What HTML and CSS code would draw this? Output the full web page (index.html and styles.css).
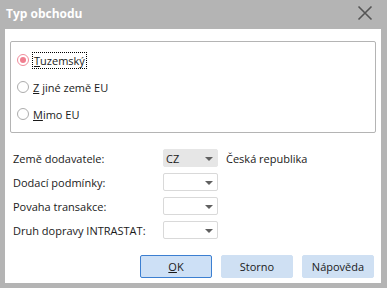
FILE: index.html
```html
<!DOCTYPE html>
<html lang="cs">
<head>
    <meta charset="UTF-8">
    <title>Typ obchodu</title>
    <link rel="stylesheet" href="styles.css">
</head>
<body>
    <div class="dialog">
        <div class="titlebar">
            <span class="title">Typ obchodu</span>
            <svg class="close" width="16" height="16" viewBox="0 0 16 16">
                <path d="M1.5 1.5 L14.5 14.5 M14.5 1.5 L1.5 14.5" stroke="#555" stroke-width="1.6" fill="none"/>
            </svg>
        </div>
        <div class="client">
            <div class="group">
                <label class="radio">
                    <span class="dot checked"></span>
                    <span class="focus"><u>T</u>uzemský</span>
                </label>
                <label class="radio">
                    <span class="dot"></span>
                    <span><u>Z</u> jiné země EU</span>
                </label>
                <label class="radio">
                    <span class="dot"></span>
                    <span><u>M</u>imo EU</span>
                </label>
            </div>

            <div class="fields">
                <div class="row">
                    <span class="label">Země dodavatele:</span>
                    <div class="combo disabled"><span>CZ</span><i class="arrow"></i></div>
                    <span class="note">Česká republika</span>
                </div>
                <div class="row">
                    <span class="label">Dodací podmínky:</span>
                    <div class="combo"><span></span><i class="arrow"></i></div>
                </div>
                <div class="row">
                    <span class="label">Povaha transakce:</span>
                    <div class="combo"><span></span><i class="arrow"></i></div>
                </div>
                <div class="row">
                    <span class="label">Druh dopravy INTRASTAT:</span>
                    <div class="combo"><span></span><i class="arrow"></i></div>
                </div>
            </div>

            <div class="buttons">
                <button class="default"><u>O</u>K</button>
                <button>Storno</button>
                <button>Nápověda</button>
            </div>
        </div>
    </div>
</body>
</html>
```

FILE: styles.css
```css
body {
    margin: 0;
    background-color: #b4b4b4;
    font-family: "Open Sans", "Noto Sans", sans-serif;
    font-size: 11px;
    color: #1a1a1a;
}
.dialog {
    width: 387px;
    height: 288px;
    display: flex;
    flex-direction: column;
}
.titlebar {
    height: 29px;
    display: flex;
    align-items: center;
    justify-content: space-between;
    padding: 0 14px 0 6px;
    box-sizing: border-box;
}
.title {
    color: white;
    font-weight: bold;
    font-size: 12px;
    margin-top: -3px;
}
.close {
    margin-top: -3px;
}
.client {
    background-color: white;
    margin: 0 6px 5px 5px;
    height: 254px;
    padding: 12px 5px 0 5px;
    box-sizing: border-box;
}
.group {
    height: 92px;
    border: 1px solid #b4b4b4;
    border-radius: 2px;
    box-sizing: border-box;
    padding: 11px 0 0 6px;
    display: flex;
    flex-direction: column;
    gap: 13px;
}
.radio {
    display: flex;
    align-items: center;
    height: 14px;
}
.dot {
    width: 10px;
    height: 10px;
    border: 1px solid #acacac;
    border-radius: 50%;
    margin-right: 4px;
    position: relative;
}
.dot.checked {
    border-color: #f08c9b;
}
.dot.checked::after {
    content: "";
    position: absolute;
    left: 2px;
    top: 2px;
    width: 6px;
    height: 6px;
    border-radius: 50%;
    background-color: #f07e8f;
}
.focus {
    outline: 1px dotted #000;
    outline-offset: 0;
    padding: 0 1px;
}
.fields {
    margin-top: 16px;
    padding-left: 3px;
    display: flex;
    flex-direction: column;
    gap: 6px;
}
.row {
    display: flex;
    align-items: center;
    height: 18px;
}
.label {
    width: 150px;
}
.combo {
    width: 55px;
    height: 18px;
    border: 1px solid #d9d9d9;
    border-radius: 2px;
    box-sizing: border-box;
    display: flex;
    align-items: center;
    justify-content: space-between;
    padding: 0 4px 0 2px;
}
.combo.disabled {
    background-color: #e6e6e6;
    border-color: #e6e6e6;
}
.arrow {
    width: 0;
    height: 0;
    border-left: 4px solid transparent;
    border-right: 4px solid transparent;
    border-top: 4px solid #606060;
    margin-top: 1px;
}
.note {
    margin-left: 8px;
}
.buttons {
    margin-top: 16px;
    display: flex;
    justify-content: flex-end;
    gap: 9px;
    padding-right: 2px;
}
button {
    width: 72px;
    height: 23px;
    font-family: inherit;
    font-size: 11px;
    color: #1a1a1a;
    background-color: #cfe0f3;
    border: 1px solid #cfe0f3;
    border-radius: 2px;
    padding: 0;
}
button.default {
    border-color: #3c7fd1;
    background-color: #cde0f6;
}
```
